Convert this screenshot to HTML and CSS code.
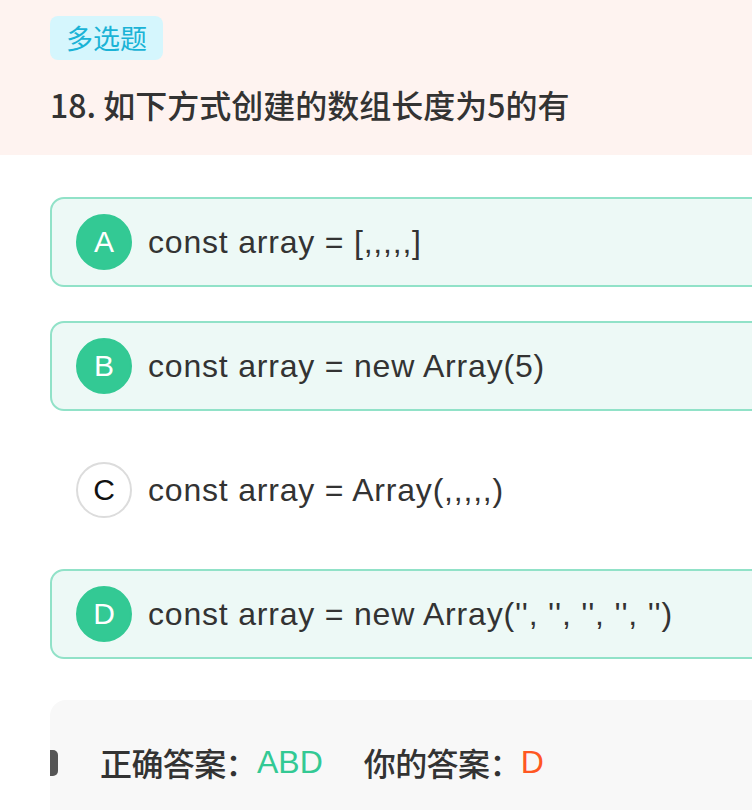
FILE: index.html
```html
<!DOCTYPE html>
<html lang="zh">
<head>
<meta charset="utf-8">
<link rel="stylesheet" href="styles.css">
</head>
<body>
<div class="page">
  <header class="head">
    <span class="tag">多选题</span>
    <h1 class="title">18. 如下方式创建的数组长度为5的有</h1>
  </header>
  <div class="options">
    <div class="opt sel"><span class="badge">A</span><span class="txt">const array = [,,,,,]</span></div>
    <div class="opt sel"><span class="badge">B</span><span class="txt">const array = new Array(5)</span></div>
    <div class="opt"><span class="badge">C</span><span class="txt">const array = Array(,,,,,)</span></div>
    <div class="opt sel"><span class="badge">D</span><span class="txt">const array = new Array('', '', '', '', '')</span></div>
  </div>
  <div class="answer">
    <span class="mark"></span>
    <span class="label">正确答案：</span><span class="right">ABD</span>
    <span class="label second">你的答案：</span><span class="mine">D</span>
  </div>
</div>
</body>
</html>
```
FILE: styles.css
```css
html, body { margin: 0; padding: 0; }
body {
  background: #fff;
  overflow: hidden;
  font-family: "Liberation Sans", "Noto Sans CJK SC", sans-serif;
  color: #333;
}
.page { width: 752px; }
.head {
  background: #fef3f0;
  height: 155px;
  box-sizing: border-box;
  padding: 16px 0 0 50px;
  display: flex;
  flex-direction: column;
  align-items: flex-start;
}
.tag {
  background: #d5f6fd;
  color: #1ab3d6;
  font-family: "Noto Sans CJK SC", sans-serif;
  font-size: 27px;
  line-height: 44px;
  height: 44px;
  padding: 0 16px;
  border-radius: 8px;
}
.title {
  margin: 22px 0 0 0;
  font-family: "Noto Sans CJK SC", sans-serif;
  font-size: 32px;
  line-height: 44px;
  font-weight: 500;
  color: #333;
}
.options {
  margin: 42px -60px 0 50px;
  display: flex;
  flex-direction: column;
  gap: 34px;
}
.opt {
  height: 90px;
  box-sizing: border-box;
  border: 2px solid transparent;
  border-radius: 14px;
  display: flex;
  align-items: center;
  padding-left: 24px;
}
.opt.sel {
  background: #edf9f6;
  border-color: #91e2c8;
}
.badge {
  width: 56px;
  height: 56px;
  border-radius: 50%;
  box-sizing: border-box;
  display: flex;
  align-items: center;
  justify-content: center;
  font-size: 30px;
  background: #fff;
  border: 2px solid #dcdcdc;
  color: #111;
  flex: none;
}
.sel .badge {
  background: #33c994;
  border-color: #33c994;
  color: #fff;
}
.txt {
  margin-left: 16px;
  font-size: 32px;
  letter-spacing: 0.8px;
  color: #333;
}
.answer {
  margin: 41px -60px 0 50px;
  background: #f8f8f8;
  border-radius: 16px 16px 0 0;
  height: 140px;
  display: flex;
  align-items: flex-start;
  padding-top: 40px;
  box-sizing: border-box;
  font-size: 32px;
  line-height: 44px;
}
.label {
  font-family: "Noto Sans CJK SC", sans-serif;
  font-weight: 500;
  color: #333;
  letter-spacing: -0.6px;
}
.mark {
  width: 8px;
  height: 26px;
  background: #555;
  border-radius: 0 5px 5px 0;
  margin-top: 10px;
  margin-right: 42px;
  flex: none;
}
.right { color: #33c994; }
.mine { color: #ff5722; }
.second { margin-left: 41px; }
```
